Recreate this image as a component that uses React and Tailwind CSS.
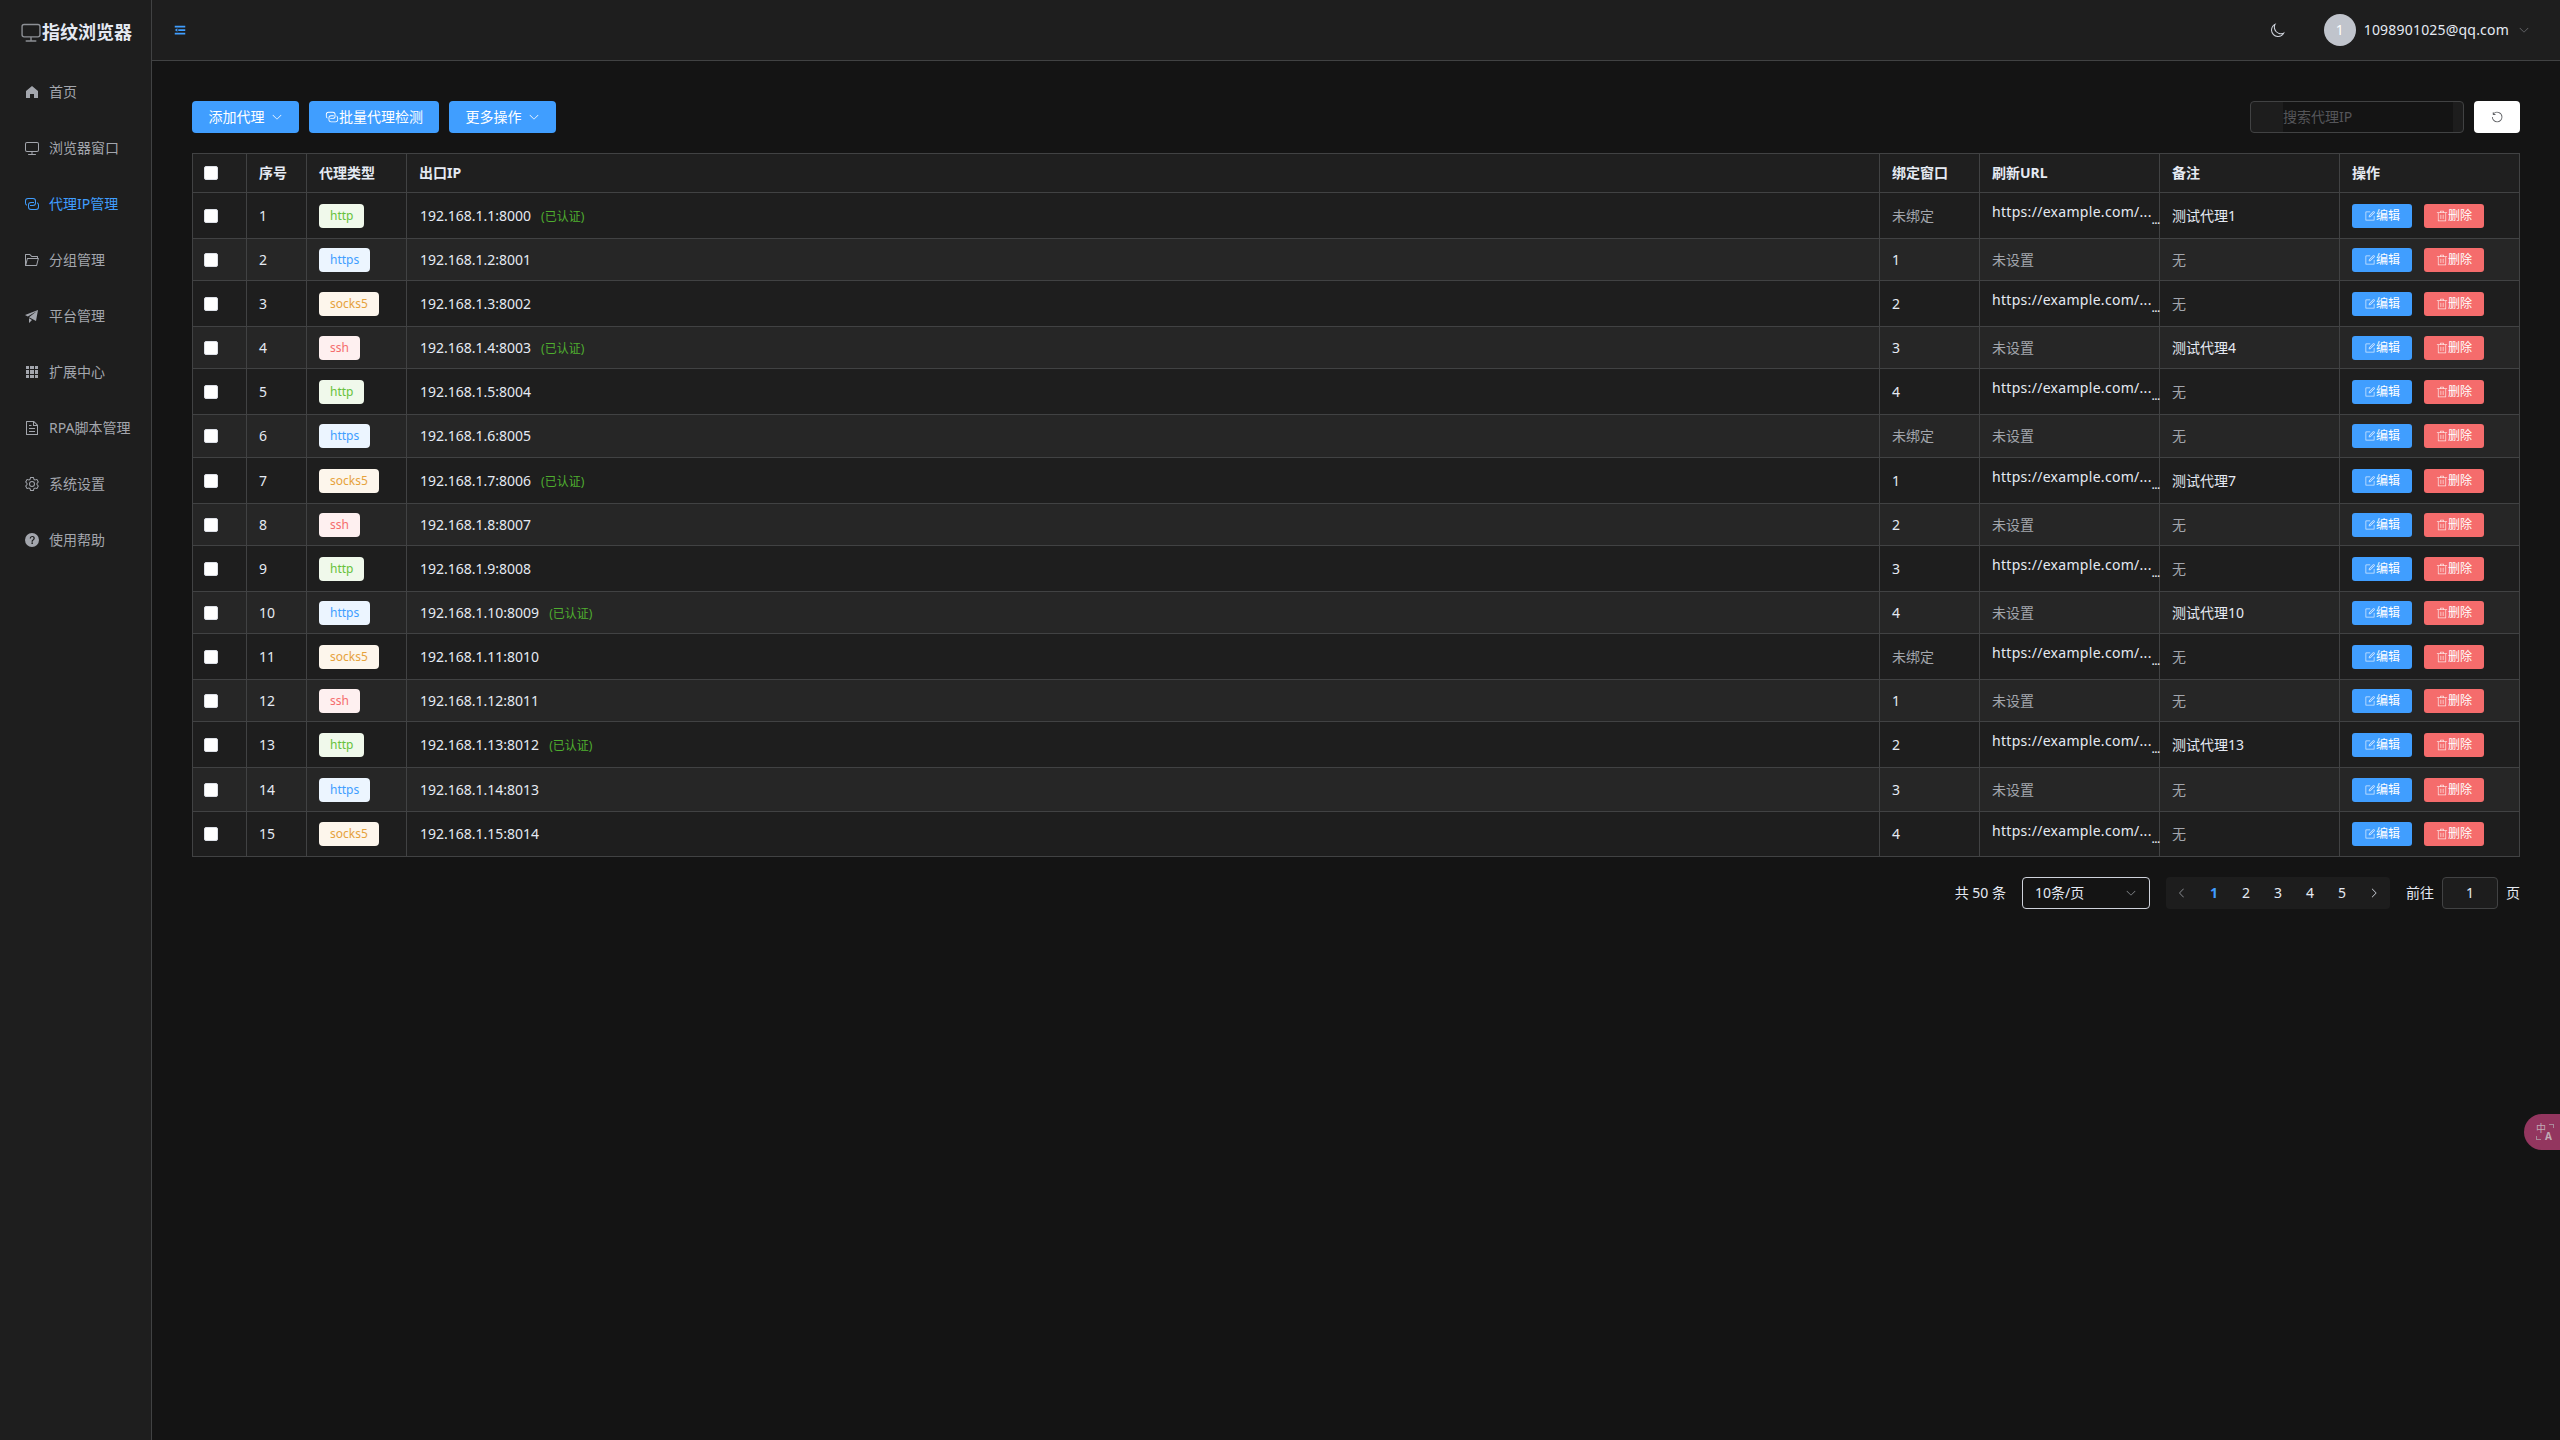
import React from "react";

// element-plus icon paths
const icons = {
  home: "M512 128 128 447.936V896h255.936V640H640v256h255.936V447.936z",
  monitor: "M544 768v128h192a32 32 0 1 1 0 64H288a32 32 0 1 1 0-64h192V768H192A128 128 0 0 1 64 640V256a128 128 0 0 1 128-128h640a128 128 0 0 1 128 128v384a128 128 0 0 1-128 128H544zM192 192a64 64 0 0 0-64 64v384a64 64 0 0 0 64 64h640a64 64 0 0 0 64-64V256a64 64 0 0 0-64-64H192z",
  connection: "M640 384v64H448a128 128 0 0 0-128 128v128a128 128 0 0 0 128 128h320a128 128 0 0 0 128-128V576a128 128 0 0 0-64-110.848V394.88c74.56 26.368 128 97.472 128 181.056v128a192 192 0 0 1-192 192H448a192 192 0 0 1-192-192V576a192 192 0 0 1 192-192h192zM384 640v-64h192a128 128 0 0 0 128-128V320a128 128 0 0 0-128-128H256a128 128 0 0 0-128 128v128a128 128 0 0 0 64 110.848v70.272A192.064 192.064 0 0 1 64 448V320a192 192 0 0 1 192-192h320a192 192 0 0 1 192 192v128a192 192 0 0 1-192 192H384z",
  folder: "M878.08 448H241.92l-96 384h636.16l96-384zM832 384v-64H485.76L357.504 192H128v448l57.92-231.744A32 32 0 0 1 216.96 384H832zm-24.96 512H96a32 32 0 0 1-32-32V160a32 32 0 0 1 32-32h287.872l128.384 128H864a32 32 0 0 1 32 32v96h23.04a32 32 0 0 1 31.04 39.744l-112 448A32 32 0 0 1 807.04 896z",
  promotion: "m64 448 832-320-128 704-446.08-243.328L832 192 242.816 545.472 64 448zm256 512V657.024L512 768 320 960z",
  grid: "M640 384v256H384V384h256zm64 0h192v256H704V384zm-64 512H384V704h256v192zm64 0V704h192v192H704zm-64-768v192H384V128h256zm64 0h192v192H704V128zM320 384v256H128V384h192zm0 512H128V704h192v192zm0-768v192H128V128h192z",
  document: "M832 384H576V128H192v768h640V384zm-26.496-64L640 154.496V320h165.504zM160 64h480l256 256v608a32 32 0 0 1-32 32H160a32 32 0 0 1-32-32V96a32 32 0 0 1 32-32zm160 448h384v64H320v-64zm0-192h160v64H320v-64zm0 384h384v64H320v-64z",
  setting: "M600.704 64a32 32 0 0 1 30.464 22.208l35.2 109.376c14.784 7.232 28.928 15.36 42.432 24.512l112.384-24.192a32 32 0 0 1 34.432 15.36L944.32 364.8a32 32 0 0 1-4.032 37.504l-77.12 85.12a357.12 357.12 0 0 1 0 49.024l77.12 85.248a32 32 0 0 1 4.032 37.504l-88.704 153.6a32 32 0 0 1-34.432 15.296L708.8 803.904c-13.44 9.088-27.648 17.28-42.368 24.512l-35.264 109.376A32 32 0 0 1 600.704 960H423.296a32 32 0 0 1-30.464-22.208L357.696 828.48a351.616 351.616 0 0 1-42.56-24.64l-112.32 24.256a32 32 0 0 1-34.432-15.36L79.68 659.2a32 32 0 0 1 4.032-37.504l77.12-85.248a357.12 357.12 0 0 1 0-48.896l-77.12-85.248A32 32 0 0 1 79.68 364.8l88.704-153.6a32 32 0 0 1 34.432-15.296l112.32 24.256c13.568-9.152 27.776-17.408 42.56-24.64l35.2-109.312A32 32 0 0 1 423.232 64H600.64zm-23.424 64H446.72l-36.352 113.088-24.512 11.968a294.113 294.113 0 0 0-34.816 20.096l-22.656 15.36-116.224-25.088-65.28 113.152 79.68 88.192-1.92 27.136a293.12 293.12 0 0 0 0 40.192l1.92 27.136-79.808 88.192 65.344 113.152 116.224-25.024 22.656 15.296a294.113 294.113 0 0 0 34.816 20.096l24.512 11.968L446.72 896h130.688l36.48-113.152 24.448-11.904a288.282 288.282 0 0 0 34.752-20.096l22.592-15.296 116.288 25.024 65.28-113.152-79.744-88.192 1.92-27.136a293.12 293.12 0 0 0 0-40.256l-1.92-27.136 79.808-88.128-65.344-113.152-116.288 24.96-22.592-15.232a287.616 287.616 0 0 0-34.752-20.096l-24.448-11.904L577.344 128zM512 320a192 192 0 1 1 0 384 192 192 0 0 1 0-384zm0 64a128 128 0 1 0 0 256 128 128 0 0 0 0-256z",
  question: "M512 64a448 448 0 1 1 0 896 448 448 0 0 1 0-896zm23.744 191.488c-52.096 0-92.928 14.784-123.2 44.352-30.976 29.568-45.76 70.4-45.76 122.496h80.256c0-29.568 5.632-52.8 17.6-68.992 13.376-19.712 35.2-28.864 66.176-28.864 23.936 0 42.944 6.336 56.32 19.712 12.672 13.376 19.712 31.68 19.712 54.912 0 17.6-6.336 34.496-19.008 49.984l-8.448 9.856c-45.76 40.832-73.216 70.4-82.368 89.408-9.856 19.008-14.08 42.24-14.08 68.992v9.856h80.96v-9.856c0-16.896 3.52-31.68 10.56-45.76 6.336-12.672 15.488-24.64 28.16-35.2 33.792-29.568 54.208-48.576 60.544-55.616 16.896-22.528 26.048-51.328 26.048-86.528 0-42.944-14.08-76.736-42.24-101.376-28.16-25.344-65.472-37.312-111.232-37.312zm-12.672 406.208a54.272 54.272 0 0 0-38.72 14.784 49.408 49.408 0 0 0-15.488 38.016c0 15.488 4.928 28.16 15.488 38.016A54.848 54.848 0 0 0 523.072 768c15.488 0 28.16-4.928 38.72-14.784a51.52 51.52 0 0 0 16.192-38.72 51.968 51.968 0 0 0-15.488-38.016 55.936 55.936 0 0 0-39.424-14.784z",
  arrowDown: "M831.872 340.864 512 652.672 192.128 340.864a30.592 30.592 0 0 0-42.752 0 29.12 29.12 0 0 0 0 41.6L489.664 714.24a32 32 0 0 0 44.672 0l340.288-331.712a29.12 29.12 0 0 0 0-41.728 30.592 30.592 0 0 0-42.752 0z",
  arrowLeft: "M609.408 149.376 277.76 489.6a32 32 0 0 0 0 44.672l331.648 340.352a29.12 29.12 0 0 0 41.728 0 30.592 30.592 0 0 0 0-42.752L339.264 511.936l311.872-319.872a30.592 30.592 0 0 0 0-42.688 29.12 29.12 0 0 0-41.728 0z",
  arrowRight: "M340.864 149.312a30.592 30.592 0 0 0 0 42.752L652.736 512 340.864 831.872a30.592 30.592 0 0 0 0 42.752 29.12 29.12 0 0 0 41.728 0L714.24 534.336a32 32 0 0 0 0-44.672L382.592 149.376a29.12 29.12 0 0 0-41.728 0z",
  edit: "M832 512a32 32 0 1 1 64 0v352a32 32 0 0 1-32 32H160a32 32 0 0 1-32-32V160a32 32 0 0 1 32-32h352a32 32 0 0 1 0 64H192v640h640V512zM469.952 554.24l52.8-7.552L847.104 222.4a32 32 0 1 0-45.248-45.248L477.44 501.44l-7.552 52.8zm422.4-422.4a96 96 0 0 1 0 135.808l-331.84 331.84a32 32 0 0 1-18.112 9.088L436.8 623.68a32 32 0 0 1-36.224-36.224l15.104-105.6a32 32 0 0 1 9.024-18.112l331.904-331.84a96 96 0 0 1 135.744 0z",
  trash: "M160 256H96a32 32 0 0 1 0-64h256V95.936a32 32 0 0 1 32-32h256a32 32 0 0 1 32 32V192h256a32 32 0 1 1 0 64h-64v672a32 32 0 0 1-32 32H192a32 32 0 0 1-32-32V256zm448-64v-64H416v64h192zM224 896h576V256H224v640zm192-128a32 32 0 0 1-32-32V416a32 32 0 0 1 64 0v320a32 32 0 0 1-32 32zm192 0a32 32 0 0 1-32-32V416a32 32 0 0 1 64 0v320a32 32 0 0 1-32 32z",
  moon: "M240.448 240.448a384 384 0 1 0 559.424 525.696 448 448 0 0 1-542.016-542.08 390.592 390.592 0 0 0-17.408 16.384zm181.056 362.048a384 384 0 0 0 525.632 16.384A448 448 0 1 1 405.056 76.8a384 384 0 0 0 16.448 525.696z",
  refresh: "M289.088 296.704h92.992a32 32 0 0 1 0 64H232.96a32 32 0 0 1-32-32V179.712a32 32 0 0 1 64 0v50.56a384 384 0 0 1 643.84 282.88 384 384 0 0 1-383.936 384 384 384 0 0 1-384-384h64a320 320 0 1 0 640 0 320 320 0 0 0-555.712-216.448z",
  fold: "M896 192H128v128h768V192zm0 256H384v128h512V448zm0 256H128v128h768V704zM320 384 128 512l192 128V384z",
};

function Icon({ name, className }) {
  return (
    <svg viewBox="0 0 1024 1024" fill="currentColor" className={className}>
      <path d={icons[name]} />
    </svg>
  );
}

const menu = [
  { icon: "home", label: "首页" },
  { icon: "monitor", label: "浏览器窗口" },
  { icon: "connection", label: "代理IP管理", active: true },
  { icon: "folder", label: "分组管理" },
  { icon: "promotion", label: "平台管理" },
  { icon: "grid", label: "扩展中心" },
  { icon: "document", label: "RPA脚本管理" },
  { icon: "setting", label: "系统设置" },
  { icon: "question", label: "使用帮助" },
];

const tagStyles = {
  http: "bg-[#f0f9eb] text-[#67c23a]",
  https: "bg-[#ecf5ff] text-[#409eff]",
  socks5: "bg-[#fdf6ec] text-[#e6a23c]",
  ssh: "bg-[#fef0f0] text-[#f56c6c]",
};
const types = ["http", "https", "socks5", "ssh"];
const rowHeights = [46, 42, 46, 42, 46, 43, 46, 42, 46, 42, 46, 42, 46, 44, 45];

const rows = rowHeights.map((h, i) => ({
  id: i + 1,
  h,
  type: types[i % 4],
  ip: `192.168.1.${i + 1}:${8000 + i}`,
  auth: i % 3 === 0,
  port: i % 5 === 0 ? "未绑定" : String(i % 5),
  url: i % 2 === 0,
  note: i % 3 === 0 ? `测试代理${i + 1}` : "无",
}));

const Check = () => <span className="block w-[14px] h-[14px] bg-white rounded-[2px] border border-[#dcdfe6]" />;

function Toolbar() {
  return (
    <div className="flex items-center justify-between mb-5">
      <div className="flex gap-[10px]">
        <button className="flex items-center justify-center w-[107px] h-8 rounded bg-[#409eff] text-white text-sm">
          添加代理
          <Icon name="arrowDown" className="w-3 h-3 ml-[6px]" />
        </button>
        <button className="flex items-center justify-center w-[130px] h-8 rounded bg-[#409eff] text-white text-sm">
          <Icon name="connection" className="w-[14px] h-[14px]" />
          批量代理检测
        </button>
        <button className="flex items-center justify-center w-[107px] h-8 rounded bg-[#409eff] text-white text-sm">
          更多操作
          <Icon name="arrowDown" className="w-3 h-3 ml-[6px]" />
        </button>
      </div>
      <div className="flex gap-[10px]">
        <div className="flex w-[214px] h-8 rounded border border-[#414243] bg-[#1d1d1d] overflow-hidden">
          <div className="ml-[32px] w-[170px] bg-[#141414] text-sm leading-[30px] text-[#55565a]">搜索代理IP</div>
        </div>
        <button className="flex items-center justify-center w-[46px] h-8 rounded bg-white text-[#606266]">
          <Icon name="refresh" className="w-[14px] h-[14px]" />
        </button>
      </div>
    </div>
  );
}

function ProxyTable() {
  const th = "border border-[#414243] px-3 text-left text-sm font-bold text-[#e5eaf3]";
  const td = "border border-[#414243] px-3 text-sm";
  return (
    <table className="w-[2328px] table-fixed border-collapse">
      <thead>
        <tr className="h-[39px] bg-[#1f1f1f]">
          <th className={`${th} w-[54px] pl-[11px]`}><Check /></th>
          <th className={`${th} w-[60px]`}>序号</th>
          <th className={`${th} w-[100px]`}>代理类型</th>
          <th className={th}>出口IP</th>
          <th className={`${th} w-[100px]`}>绑定窗口</th>
          <th className={`${th} w-[180px]`}>刷新URL</th>
          <th className={`${th} w-[180px]`}>备注</th>
          <th className={`${th} w-[180px]`}>操作</th>
        </tr>
      </thead>
      <tbody className="text-[#e5eaf3]">
        {rows.map((r) => (
          <tr key={r.id} style={{ height: r.h }} className={r.id % 2 ? "bg-[#1e1e1e]" : "bg-[#262626]"}>
            <td className={`${td} pl-[11px]`}><Check /></td>
            <td className={td}>{r.id}</td>
            <td className={td}>
              <span className={`inline-flex items-center h-6 px-[11px] rounded text-xs align-middle ${tagStyles[r.type]}`}>{r.type}</span>
            </td>
            <td className={`${td} pl-[13px]`}>
              {r.ip}
              {r.auth && <span className="ml-[10px] text-xs text-[#4fae2f]">(已认证)</span>}
            </td>
            <td className={`${td} ${r.port === "未绑定" ? "text-[#a3a6ad]" : ""}`}>{r.port}</td>
            <td className={`${td} pr-0 ${r.url ? "" : "text-[#a3a6ad]"}`}>
              {r.url ? (
                <div className="flex items-end h-[27px] w-[168px]">
                  <span className="w-[162px] whitespace-nowrap self-start tracking-[0.3px]">https://example.com/...</span>
                  <span className="text-[10px] leading-[17px] font-bold">...</span>
                </div>
              ) : (
                "未设置"
              )}
            </td>
            <td className={`${td} ${r.note === "无" ? "text-[#a3a6ad]" : ""}`}>{r.note}</td>
            <td className={td}>
              <div className="flex gap-3">
                <button className="flex items-center justify-center w-[60px] h-6 rounded-[3px] bg-[#409eff] text-white text-xs">
                  <Icon name="edit" className="w-3 h-3 opacity-80" />
                  编辑
                </button>
                <button className="flex items-center justify-center w-[60px] h-6 rounded-[3px] bg-[#f56c6c] text-white text-xs">
                  <Icon name="trash" className="w-3 h-3 opacity-80" />
                  删除
                </button>
              </div>
            </td>
          </tr>
        ))}
      </tbody>
    </table>
  );
}

function Pagination() {
  return (
    <div className="flex items-center justify-end mt-5 text-sm text-[#e5eaf3] h-8">
      <span>共 50 条</span>
      <div className="flex items-center justify-between w-[128px] h-8 ml-4 px-3 rounded border border-[#cfd3dc] bg-[#141414]">
        10条/页
        <Icon name="arrowDown" className="w-3 h-3 text-[#8d9095]" />
      </div>
      <div className="flex h-8 ml-4 bg-[#1d1d1d] rounded-sm">
        <span className="flex items-center justify-center w-8 text-[#8d9095]"><Icon name="arrowLeft" className="w-3 h-3" /></span>
        {[1, 2, 3, 4, 5].map((n) => (
          <span key={n} className={`flex items-center justify-center w-8 ${n === 1 ? "text-[#409eff] font-bold" : ""}`}>{n}</span>
        ))}
        <span className="flex items-center justify-center w-8 text-[#cfd3dc]"><Icon name="arrowRight" className="w-3 h-3" /></span>
      </div>
      <span className="ml-4">前往</span>
      <div className="flex items-center justify-center w-[56px] h-8 ml-2 rounded border border-[#414243] bg-[#1d1d1d]">1</div>
      <span className="ml-2">页</span>
    </div>
  );
}

export default function App() {
  return (
    <div className="relative flex min-h-screen bg-[#141414] overflow-hidden font-['Noto_Sans','Noto_Sans_CJK_SC',sans-serif]">
      <aside className="w-[152px] shrink-0 bg-[#1e1e1e] border-r border-[#414243]">
        <div className="flex items-center h-[64px] pl-5">
          <Icon name="monitor" className="w-[22px] h-[22px] text-[#8d9095]" />
          <span className="text-lg font-bold text-[#e5eaf3] whitespace-nowrap">指纹浏览器</span>
        </div>
        <nav>
          {menu.map((m) => (
            <div key={m.label} className={`flex items-center h-14 pl-6 gap-[9px] text-sm whitespace-nowrap ${m.active ? "text-[#409eff]" : "text-[#a3a6ad]"}`}>
              <Icon name={m.icon} className="w-4 h-4 shrink-0" />
              {m.label}
            </div>
          ))}
        </nav>
      </aside>

      <div className="flex-1 min-w-0">
        <header className="flex items-center h-[61px] pl-[21px] pr-[30px] bg-[#1e1e1e] border-b border-[#414243]">
          <Icon name="fold" className="w-[14px] h-[14px] text-[#409eff]" />
          <Icon name="moon" className="w-4 h-4 ml-auto text-[#cfd3dc]" />
          <span className="flex items-center justify-center w-8 h-8 ml-[38px] rounded-full bg-[#c0c4cc] text-white text-sm">1</span>
          <span className="ml-2 text-sm tracking-[0.2px] text-[#e5eaf3]">1098901025@qq.com</span>
          <Icon name="arrowDown" className="w-3 h-3 ml-[9px] text-[#6c6e72]" />
        </header>
        <main className="pt-10 pl-10 pr-10">
          <Toolbar />
          <ProxyTable />
          <Pagination />
        </main>
      </div>

      <div className="absolute right-0 top-[1114px] flex items-center w-9 h-9 pl-[12px] rounded-l-[18px] bg-[#93365f] text-[#c0aab5]">
        <div className="grid grid-cols-[9px_9px] grid-rows-[8px_8px] text-[10px] leading-[8px]">
          <span>中</span>
          <span className="ml-1 mb-1 border-t border-r border-[#a98a9a]" />
          <span className="mr-1 mt-1 border-b border-l border-[#a98a9a]" />
          <span className="font-bold">A</span>
        </div>
      </div>
    </div>
  );
}
